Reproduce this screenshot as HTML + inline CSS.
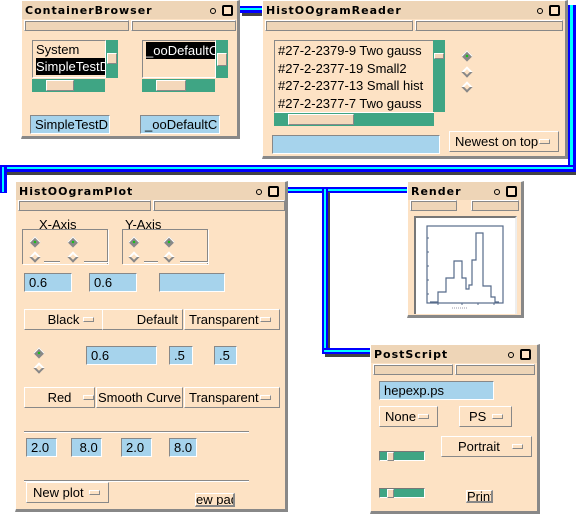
<!DOCTYPE html>
<html><head><style>
*{box-sizing:border-box;margin:0;padding:0}
body{width:578px;height:514px;background:#fff;position:relative;overflow:hidden;font-family:"Liberation Sans",sans-serif;font-size:13px;color:#000}
.a{position:absolute}
.win{position:absolute;background:#fde2c4;border-right:3px solid #888;border-bottom:3px solid #888;border-left:1px solid #fff;border-top:1px solid #fff}
.tb{position:absolute;left:0;right:0;top:0;height:18px;background:#eed5b7}
.tt{position:absolute;left:3px;top:3px;font-size:11px;font-weight:bold;letter-spacing:1px;font-family:"DejaVu Sans",sans-serif}
.ci{position:absolute;top:7px;width:6px;height:6px;border:1.5px solid #000;border-radius:50%}
.sq{position:absolute;top:4px;width:11px;height:11px;border:2px solid #000;border-radius:2px;background:#fde2c4}
.hb{position:absolute;height:11px;background:#eed5b7;border:1px solid #fff;border-right-color:#888;border-bottom-color:#888;box-shadow:inset 1px 1px 0 #888}
.fld{position:absolute;background:#a6d3ec;border:1px solid #fff;border-top-color:#888;border-left-color:#888;padding-left:4px;line-height:17px;font-size:13px}
.opt{position:absolute;border:1px solid #fff;border-right-color:#888;border-bottom-color:#888;line-height:19px;text-align:center;font-size:13px}
.opt i{position:absolute;right:8px;top:7px;width:11px;height:5px;border:1px solid #fff;border-right-color:#888;border-bottom-color:#888}
.list{position:absolute;background:#fde2c4;border:1px solid #888;border-right-color:#fff;border-bottom-color:#fff;font-size:13px;line-height:17px;padding-left:3px;overflow:hidden;white-space:nowrap}
.g{position:absolute;background:#3fa584}
.th{position:absolute;background:#f4d8bb;border:1px solid #fff;border-right-color:#888;border-bottom-color:#888}
.bl{position:absolute;background:#00f}
.cy{position:absolute;background:#0ff}
.sh{position:absolute;background:#444}
.rd{position:absolute;width:8px;height:8px;transform:rotate(45deg);background:#888;border-top:1px solid #fff;border-left:1px solid #fff}
.rd.off{background:#fde2c4;border:2px solid #888;border-top-color:#fff;border-left-color:#fff}
.rd.on::after{content:"";position:absolute;left:2px;top:2px;width:2px;height:2px;background:#0c0}
.sep{position:absolute;height:2px;border-top:1px solid #888;border-bottom:1px solid #fff}
.frm{position:absolute;border:1px solid #888;border-top-width:1px;box-shadow:1px 1px 0 #fff}
</style></head><body>

<div class="sh" style="left:242px;top:8px;width:22px;height:8px"></div>
<div class="bl" style="left:240px;top:6px;width:22px;height:7px"></div>
<div class="cy" style="left:240px;top:8px;width:22px;height:2px"></div>

<div class="sh" style="left:2px;top:170px;width:574px;height:5px"></div>
<div class="bl" style="left:568px;top:5px;width:8px;height:167px"></div>
<div class="cy" style="left:570px;top:5px;width:3px;height:164px"></div>
<div class="bl" style="left:0;top:165px;width:576px;height:7px"></div>
<div class="cy" style="left:2px;top:167px;width:571px;height:2px"></div>
<div class="bl" style="left:0;top:165px;width:7px;height:28px"></div>
<div class="cy" style="left:2px;top:167px;width:2px;height:25px"></div>

<div class="bl" style="left:286px;top:187px;width:122px;height:6px"></div>
<div class="cy" style="left:286px;top:189px;width:122px;height:2px"></div>
<div class="sh" style="left:327px;top:192px;width:3px;height:162px"></div>
<div class="bl" style="left:322px;top:187px;width:6px;height:167px"></div>
<div class="cy" style="left:324px;top:189px;width:2px;height:163px"></div>
<div class="sh" style="left:325px;top:354px;width:46px;height:3px"></div>
<div class="bl" style="left:322px;top:348px;width:50px;height:6px"></div>
<div class="cy" style="left:324px;top:350px;width:48px;height:2px"></div>

<!-- ContainerBrowser -->
<div class="win" style="left:21px;top:0;width:219px;height:139px">
 <div class="tb"><span class="tt">ContainerBrowser</span><span class="ci" style="left:188px"></span><span class="sq" style="left:200px"></span></div>
 <div class="hb" style="left:2px;top:19px;width:105px"></div>
 <div class="hb" style="left:109px;top:19px;width:105px"></div>
 <div class="list" style="left:10px;top:39px;width:74px;height:38px"><div>System</div><div style="background:#000;color:#fff;display:inline-block">SimpleTestD</div></div>
 <div class="g" style="left:84px;top:39px;width:12px;height:38px"></div>
 <div class="th" style="left:85px;top:52px;width:10px;height:11px"></div>
 <div class="g" style="left:10px;top:78px;width:73px;height:13px"></div>
 <div class="th" style="left:24px;top:79px;width:28px;height:11px"></div>
 <div class="list" style="left:120px;top:39px;width:74px;height:38px"><div style="background:#000;color:#fff;display:inline-block;margin-top:1px">_ooDefaultC</div></div>
 <div class="g" style="left:194px;top:39px;width:12px;height:38px"></div>
 <div class="th" style="left:195px;top:52px;width:10px;height:13px"></div>
 <div class="g" style="left:120px;top:78px;width:73px;height:13px"></div>
 <div class="th" style="left:134px;top:79px;width:30px;height:11px"></div>
 <div class="fld" style="left:8px;top:114px;width:80px;height:19px">SimpleTestD</div>
 <div class="fld" style="left:118px;top:114px;width:80px;height:19px">_ooDefaultC</div>
</div>

<!-- HistOOgramReader -->
<div class="win" style="left:262px;top:0;width:306px;height:159px">
 <div class="tb"><span class="tt">HistOOgramReader</span><span class="ci" style="left:274px"></span><span class="sq" style="left:286px"></span></div>
 <div class="hb" style="left:2px;top:19px;width:148px"></div>
 <div class="hb" style="left:152px;top:19px;width:148px"></div>
 <div class="list" style="left:11px;top:39px;width:160px;height:73px;line-height:17.5px;padding-top:1px"><div>#27-2-2379-9 Two gauss</div><div>#27-2-2377-19 Small2</div><div>#27-2-2377-13 Small hist</div><div>#27-2-2377-7 Two gauss</div></div>
 <div class="g" style="left:170px;top:39px;width:12px;height:72px"></div>
 <div class="th" style="left:171px;top:52px;width:10px;height:6px"></div>
 <div class="g" style="left:11px;top:112px;width:160px;height:13px"></div>
 <div class="th" style="left:25px;top:113px;width:66px;height:11px"></div>
 <div class="rd on" style="left:200px;top:51px"></div>
 <div class="rd off" style="left:200px;top:67px"></div>
 <div class="rd off" style="left:200px;top:82px"></div>
 <div class="fld" style="left:9px;top:134px;width:168px;height:19px"></div>
 <div class="opt" style="left:186px;top:130px;width:110px;height:21px;text-align:left;padding-left:5px;line-height:19px">Newest on top<i></i></div>
</div>

<!-- HistOOgramPlot -->
<div class="win" style="left:15px;top:181px;width:273px;height:331px">
 <div class="tb"><span class="tt">HistOOgramPlot</span><span class="ci" style="left:240px"></span><span class="sq" style="left:252px"></span></div>
 <div class="hb" style="left:2px;top:18px;width:133px"></div>
 <div class="hb" style="left:137px;top:18px;width:132px"></div>
 <div class="a" style="left:23px;top:35px">X-Axis</div>
 <div class="a" style="left:109px;top:35px">Y-Axis</div>
 <div class="frm" style="left:6px;top:47px;width:86px;height:35px;border-bottom:none"></div>
 <div class="frm" style="left:106px;top:47px;width:86px;height:35px;border-bottom:none"></div>
 <div class="rd on" style="left:15px;top:56px"></div><div class="rd on" style="left:53px;top:56px"></div>
 <div class="rd off" style="left:15px;top:71px"></div><div class="rd off" style="left:53px;top:71px"></div>
 <div class="rd on" style="left:114px;top:56px"></div><div class="rd on" style="left:149px;top:56px"></div>
 <div class="rd off" style="left:114px;top:71px"></div><div class="rd off" style="left:149px;top:71px"></div>
 <div class="sep" style="left:28px;top:79px;width:16px"></div>
 <div class="sep" style="left:68px;top:79px;width:24px"></div>
 <div class="sep" style="left:128px;top:79px;width:14px"></div>
 <div class="sep" style="left:164px;top:79px;width:28px"></div>
 <div class="fld" style="left:8px;top:91px;width:48px;height:19px">0.6</div>
 <div class="fld" style="left:73px;top:91px;width:48px;height:19px">0.6</div>
 <div class="fld" style="left:143px;top:91px;width:66px;height:19px"></div>
 <div class="opt" style="left:8px;top:127px;width:79px;height:21px">Black<i></i></div>
 <div class="opt" style="left:86px;top:127px;width:81px;height:21px;text-align:right;padding-right:4px">Default</div>
 <div class="opt" style="left:168px;top:127px;width:96px;height:21px;text-align:left;padding-left:4px;white-space:nowrap">Transparent<i></i></div>
 <div class="rd on" style="left:19px;top:167px"></div>
 <div class="rd off" style="left:19px;top:182px"></div>
 <div class="fld" style="left:70px;top:164px;width:71px;height:19px">0.6</div>
 <div class="fld" style="left:153px;top:164px;width:24px;height:19px">.5</div>
 <div class="fld" style="left:198px;top:164px;width:23px;height:19px">.5</div>
 <div class="opt" style="left:8px;top:205px;width:71px;height:21px">Red<i style="right:0"></i></div>
 <div class="opt" style="left:80px;top:205px;width:87px;height:21px;white-space:nowrap">Smooth Curve</div>
 <div class="opt" style="left:168px;top:205px;width:96px;height:21px;text-align:left;padding-left:4px;white-space:nowrap">Transparent<i></i></div>
 <div class="sep" style="left:8px;top:249px;width:225px"></div>
 <div class="fld" style="left:10px;top:256px;width:31px;height:19px">2.0</div>
 <div class="fld" style="left:55px;top:256px;width:31px;height:19px">&nbsp;8.0</div>
 <div class="fld" style="left:105px;top:256px;width:31px;height:19px">2.0</div>
 <div class="fld" style="left:153px;top:256px;width:28px;height:19px">8.0</div>
 <div class="sep" style="left:8px;top:298px;width:225px"></div>
 <div class="opt" style="left:10px;top:300px;width:83px;height:21px;text-align:left;padding-left:6px">New plot<i></i></div>
 <div class="a" style="left:179px;top:311px;width:40px;height:14px;background:#fde2c4;border:1px solid #fff;border-right:2px solid #888;border-bottom:2px solid #888;line-height:11px;font-size:13px;overflow:hidden;white-space:nowrap">ew pad</div>
</div>

<!-- Render -->
<div class="win" style="left:407px;top:181px;width:117px;height:137px">
 <div class="tb"><span class="tt">Render</span><span class="ci" style="left:86px"></span><span class="sq" style="left:98px"></span></div>
 <div class="hb" style="left:2px;top:18px;width:47px"></div>
 <div class="hb" style="left:63px;top:18px;width:48px"></div>
 <div class="a" style="left:6px;top:34px;width:103px;height:98px;background:#fff;border:2px solid #777;border-right-color:#eee;border-bottom:none">
  <svg width="99" height="96" viewBox="0 0 99 96"><rect x="11" y="8" width="76" height="77" fill="none" stroke="#566b8a" stroke-width="1.2"/>
  <path d="M14 84 H22 V74 H30 V60 H38 V43 H46 V60 H50 V71 H53 V67 H56 V42 H60 V15 H67 V68 H75 V79 H79 V84 H83" fill="none" stroke="#566b8a" stroke-width="1.2"/>
  <path d="M11 20h2M11 34h2M11 48h2M11 62h2M11 76h2M22 85v2M46 85v2M62 85v2M78 85v2" stroke="#566b8a"/>
  <path d="M36 90h16" stroke="#99a" stroke-dasharray="1 1"/></svg>
 </div>
</div>

<!-- PostScript -->
<div class="win" style="left:370px;top:344px;width:170px;height:170px">
 <div class="tb"><span class="tt">PostScript</span><span class="ci" style="left:137px"></span><span class="sq" style="left:149px"></span></div>
 <div class="hb" style="left:2px;top:19px;width:80px"></div>
 <div class="hb" style="left:84px;top:19px;width:80px"></div>
 <div class="fld" style="left:8px;top:36px;width:115px;height:19px">hepexp.ps</div>
 <div class="opt" style="left:8px;top:61px;width:59px;height:21px;text-align:left;padding-left:5px">None<i></i></div>
 <div class="opt" style="left:88px;top:61px;width:53px;height:21px;text-align:left;padding-left:9px">PS<i></i></div>
 <div class="opt" style="left:70px;top:91px;width:91px;height:21px;text-align:left;padding-left:16px">Portrait<i></i></div>
 <div class="g" style="left:8px;top:106px;width:46px;height:10px;border:1px solid #fff;border-top-color:#777;border-left-color:#777"></div>
 <div class="th" style="left:16px;top:107px;width:7px;height:9px"></div>
 <div class="g" style="left:8px;top:143px;width:46px;height:10px;border:1px solid #fff;border-top-color:#777;border-left-color:#777"></div>
 <div class="th" style="left:16px;top:144px;width:7px;height:9px"></div>
 <div class="a" style="left:95px;top:145px;width:27px;height:13px;border:1px solid #fff;border-right:2px solid #888;border-bottom:2px solid #888;line-height:11px;font-size:13px;overflow:hidden">Print</div>
</div>
</body></html>
